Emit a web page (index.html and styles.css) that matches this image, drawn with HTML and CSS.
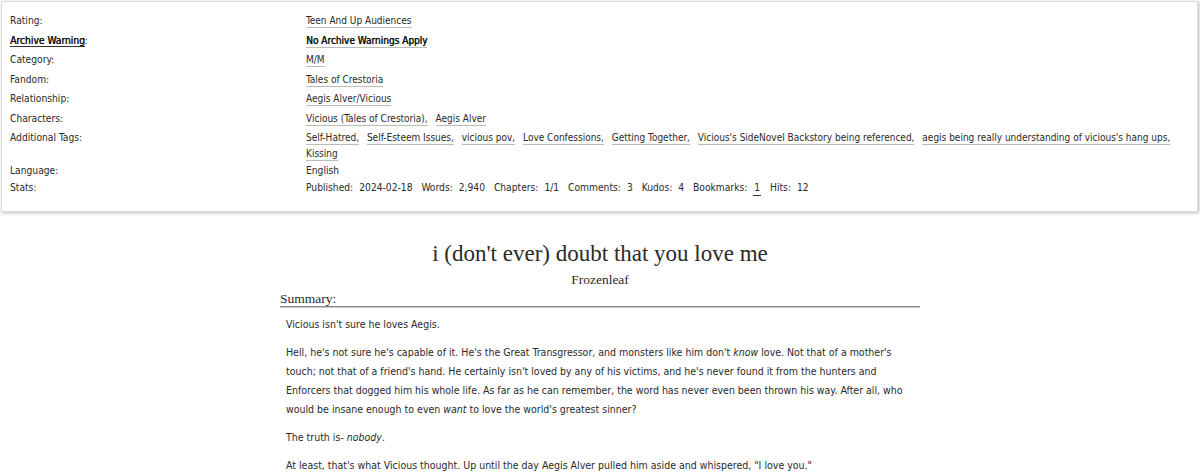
FILE: index.html
```html
<!DOCTYPE html>
<html>
<head>
<meta charset="utf-8">
<link rel="stylesheet" href="styles.css">
</head>
<body>
<div class="meta-box">
  <dl class="meta">
    <dt>Rating:</dt>
    <dd><span class="tag">Teen And Up Audiences</span></dd>
    <dt><span class="warn-label">Archive Warning</span>:</dt>
    <dd><span class="tag bold">No Archive Warnings Apply</span></dd>
    <dt>Category:</dt>
    <dd><span class="tag">M/M</span></dd>
    <dt>Fandom:</dt>
    <dd><span class="tag">Tales of Crestoria</span></dd>
    <dt>Relationship:</dt>
    <dd><span class="tag">Aegis Alver/Vicious</span></dd>
    <dt>Characters:</dt>
    <dd><span class="tag">Vicious (Tales of Crestoria),</span> <span class="tag">Aegis Alver</span></dd>
    <dt class="wrap">Additional Tags:</dt>
    <dd class="wrap"><span class="tag">Self-Hatred,</span> <span class="tag">Self-Esteem Issues,</span> <span class="tag">vicious pov,</span> <span class="tag">Love Confessions,</span> <span class="tag">Getting Together,</span> <span class="tag">Vicious's SideNovel Backstory being referenced,</span> <span class="tag">aegis being really understanding of vicious's hang ups,</span> <span class="tag">Kissing</span></dd>
    <dt class="plain">Language:</dt>
    <dd class="plain">English</dd>
    <dt class="plain">Stats:</dt>
    <dd class="plain stats">
      <span class="stat"><span class="sl">Published:</span>2024-02-18</span>
      <span class="stat"><span class="sl">Words:</span>2,940</span>
      <span class="stat"><span class="sl">Chapters:</span>1/1</span>
      <span class="stat"><span class="sl">Comments:</span>3</span>
      <span class="stat"><span class="sl">Kudos:</span>4</span>
      <span class="stat"><span class="sl">Bookmarks:</span><span class="dark-link">1</span></span>
      <span class="stat"><span class="sl">Hits:</span>12</span>
    </dd>
  </dl>
</div>

<div class="preface">
  <h2 class="title">i (don't ever) doubt that you love me</h2>
  <h3 class="byline">Frozenleaf</h3>
  <div class="summary">
    <h3 class="heading">Summary:</h3>
    <blockquote class="userstuff">
      <p>Vicious isn't sure he loves Aegis.</p>
      <p>Hell, he's not sure he's capable of it. He's the Great Transgressor, and monsters like him don't <em>know</em> love. Not that of a mother's touch; not that of a friend's hand. He certainly isn't loved by any of his victims, and he's never found it from the hunters and Enforcers that dogged him his whole life. As far as he can remember, the word has never even been thrown his way. After all, who would be insane enough to even <em>want</em> to love the world's greatest sinner?</p>
      <p>The truth is- <em>nobody</em>.</p>
      <p>At least, that's what Vicious thought. Up until the day Aegis Alver pulled him aside and whispered, "I love you."</p>
    </blockquote>
  </div>
</div>
</body>
</html>
```

FILE: styles.css
```css
html, body {
  margin: 0;
  padding: 0;
  background: #fff;
}
body {
  font-family: "DejaVu Sans Condensed", "DejaVu Sans", sans-serif;
  color: #2a2a2a;
  font-size: 10.2px;
}
.meta-box {
  margin: 1px 2px 0 1px;
  border: 1px solid #ddd;
  box-shadow: 1px 1px 3px #bbb;
  padding: 9px 0 15px 8px;
}
.meta {
  display: grid;
  grid-template-columns: 296px 1fr;
  margin: 0;
}
.meta dt, .meta dd {
  margin: 0;
  line-height: 19.5px;
}
.meta dd {
  padding-right: 18px;
  font-size: 10px;
}
.meta .wrap {
  line-height: 16px;
  padding: 1.75px 0 0.5px;
}
.meta dd.wrap {
  padding-right: 18px;
}
.meta .plain {
  line-height: 17px;
}
.meta dd.plain {
  font-size: 10.2px;
}
.warn-label {
  color: #111;
  text-shadow: 0.45px 0 0 #111;
  border-bottom: 1px solid #333;
}
.tag {
  border-bottom: 1px solid #bbb;
  padding-bottom: 1px;
  margin-right: 5px;
}
.tag.bold {
  color: #111;
  text-shadow: 0.45px 0 0 #111;
}
.stats .stat {
  margin-right: 6px;
}
.stats .sl {
  margin-right: 6px;
}
.dark-link {
  border-bottom: 1px solid #333;
  padding: 0 1px 2px;
}
.preface {
  width: 640px;
  margin: 0 auto;
  padding-top: 29px;
}
.title {
  font-family: "Liberation Serif", "DejaVu Serif", serif;
  font-weight: normal;
  font-size: 23px;
  text-align: center;
  margin: 0;
  line-height: 26px;
}
.byline {
  font-family: "Liberation Serif", serif;
  font-weight: normal;
  font-size: 13.5px;
  text-align: center;
  margin: 5px 0 0;
  line-height: 16px;
}
.summary .heading {
  font-family: "Liberation Serif", serif;
  font-weight: normal;
  font-size: 13.5px;
  margin: 3px 0 0;
  line-height: 15px;
  border-bottom: 1px solid #888;
  box-shadow: 0 1px 0 #ccc;
}
.userstuff {
  margin: 0;
  padding: 8px 0 0 6px;
  font-size: 10.5px;
  line-height: 19px;
}
.userstuff p {
  margin: 0 0 9px;
}
```
